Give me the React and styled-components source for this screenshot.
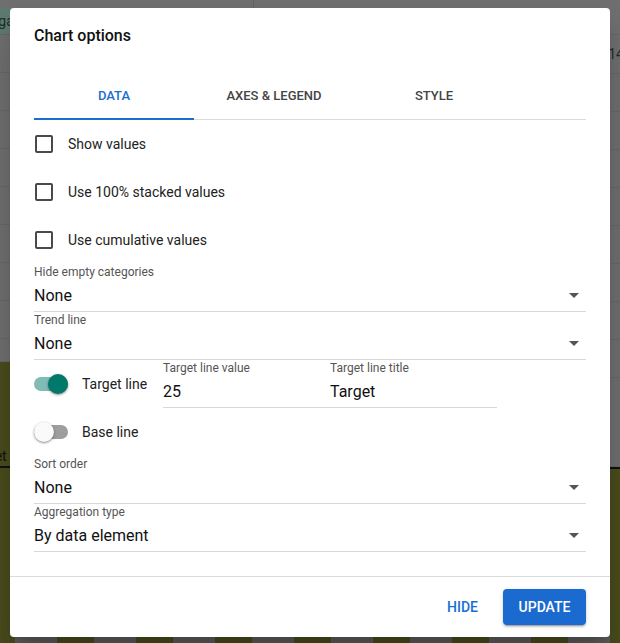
import React from "react";
import styled, { createGlobalStyle } from "styled-components";

const GlobalStyle = createGlobalStyle`
  body {
    margin: 0;
    font-family: Roboto, "Noto Sans", "Liberation Sans", sans-serif;
  }
`;

const Page = styled.div`
  position: relative;
  width: 620px;
  height: 643px;
  overflow: hidden;
  display: flex;
  flex-direction: column;
  background: #6f6f6f;
`;

const Panes = styled.div`
  flex: 1;
  display: grid;
  grid-template-columns: 253px 1fr;
`;

const Pane = styled.div`
  display: flex;
  flex-direction: column;
  border-left: ${props => (props.divided ? "1px solid #646464" : "none")};
`;

const TopGap = styled.div`
  height: ${props => props.h}px;
  flex: none;
`;

const HeadCell = styled.div`
  height: 26px;
  background: #5f7a72;
  color: #1d2a26;
  font-size: 14px;
  line-height: 26px;
  text-indent: -31px;
  overflow: hidden;
  white-space: nowrap;
  border-bottom: 1px solid #666;
`;

const Row = styled.div`
  height: ${props => props.h || 37}px;
  flex: none;
  border-bottom: 1px solid #676767;
  display: flex;
  align-items: center;
  justify-content: flex-end;
  font-size: 14px;
  color: #1f2a33;
`;

const RowValue = styled.span`
  margin-right: -4px;
`;

const Olive = styled.div`
  flex: 1;
  background: #494c1c;
  display: flex;
  flex-direction: column;
  justify-content: flex-end;
  border-top: ${props => (props.ruled ? "2px solid #111" : "none")};
`;

const Tag = styled.div`
  font-size: 14px;
  color: #111;
  text-indent: -33px;
  white-space: nowrap;
  overflow: hidden;
  padding-bottom: 2px;
  border-bottom: 2px solid #111;
  margin-bottom: 145px;
`;

const Bars = styled.div`
  height: 30px;
  flex: none;
  background: #494c1c;
  display: flex;
  gap: 37px;
  padding-left: 15px;
`;

const Bar = styled.div`
  width: 42px;
  flex: none;
  background: #5c5c5c;
`;

const Dialog = styled.div`
  position: absolute;
  left: 10px;
  top: 8px;
  width: 600px;
  height: 629px;
  background: #fff;
  border-radius: 4px;
  box-shadow: 0 11px 15px -7px rgba(0, 0, 0, 0.2),
    0 24px 38px 3px rgba(0, 0, 0, 0.14);
  display: flex;
  flex-direction: column;
`;

const Title = styled.h2`
  margin: 0;
  padding: 16px 24px 0;
  font-size: 16px;
  line-height: 24px;
  font-weight: 500;
  color: #111;
`;

const Body = styled.div`
  flex: 1;
  padding: 23px 24px 24px;
`;

const Tabs = styled.div`
  display: flex;
  height: 48px;
  border-bottom: 1px solid #dcdcdc;
`;

const Tab = styled.div`
  width: 160px;
  display: flex;
  align-items: center;
  justify-content: center;
  font-size: 13px;
  font-weight: 500;
  text-transform: uppercase;
  color: ${props => (props.active ? "#1a6ed2" : "#444")};
  border-bottom: 2px solid ${props => (props.active ? "#1a6ed2" : "transparent")};
  margin-bottom: -1px;
  padding-top: 1px;
`;

const CheckRow = styled.div`
  height: 48px;
  display: flex;
  align-items: center;
`;

const Box = styled.span`
  width: 14px;
  height: 14px;
  margin-left: 1px;
  border: 2px solid #4a4a4a;
  border-radius: 2px;
  flex: none;
`;

const CheckLabel = styled.span`
  margin-left: 15px;
  font-size: 14px;
  color: #222;
`;

const Field = styled.div`
  height: 48px;
  width: ${props => (props.w ? `${props.w}px` : "auto")};
  flex: none;
  display: flex;
  flex-direction: column;
`;

const FieldLabel = styled.div`
  font-size: 12px;
  line-height: 14px;
  color: #555;
  margin-top: 1px;
`;

const FieldValue = styled.div`
  flex: 1;
  display: flex;
  align-items: center;
  justify-content: space-between;
  border-bottom: 1px solid #d8d8d8;
  font-size: 16px;
  color: #111;
`;

const Caret = styled.span`
  width: 0;
  height: 0;
  border-left: 5px solid transparent;
  border-right: 5px solid transparent;
  border-top: 5px solid #555;
  margin-right: 7px;
  margin-top: 1px;
`;

const ToggleRow = styled.div`
  height: 48px;
  display: flex;
  align-items: center;
`;

const SwitchGroup = styled.div`
  width: 129px;
  flex: none;
  display: flex;
  align-items: center;
`;

const Track = styled.span`
  width: 34px;
  height: 14px;
  border-radius: 7px;
  flex: none;
  display: flex;
  align-items: center;
  justify-content: ${props => (props.on ? "flex-end" : "flex-start")};
  background: ${props => (props.on ? "#7fbcb5" : "#9e9e9e")};
`;

const Thumb = styled.span`
  width: 20px;
  height: 20px;
  border-radius: 50%;
  flex: none;
  background: ${props => (props.on ? "#00796b" : "#fafafa")};
  box-shadow: 0 1px 3px rgba(0, 0, 0, 0.35), 0 1px 1px rgba(0, 0, 0, 0.14);
`;

const ToggleLabel = styled.span`
  margin-left: 14px;
  font-size: 14px;
  color: #222;
`;

const Footer = styled.div`
  border-top: 1px solid #dcdcdc;
  padding: 12px 24px 12px;
  display: flex;
  justify-content: flex-end;
  align-items: center;
  gap: 9px;
`;

const Button = styled.button`
  height: 36px;
  padding: 0 ${props => (props.primary ? 15.5 : 16)}px;
  border: none;
  border-radius: 4px;
  font-family: inherit;
  font-size: 14px;
  font-weight: 500;
  text-transform: uppercase;
  cursor: pointer;
  color: ${props => (props.primary ? "#fff" : "#1a6ed2")};
  background: ${props => (props.primary ? "#1a6ad0" : "transparent")};
  box-shadow: ${props =>
    props.primary
      ? "0 3px 1px -2px rgba(0,0,0,0.2), 0 2px 2px 0 rgba(0,0,0,0.14), 0 1px 5px 0 rgba(0,0,0,0.12)"
      : "none"};
`;

function Select({ label, value }) {
  return (
    <Field>
      <FieldLabel>{label}</FieldLabel>
      <FieldValue>
        {value}
        <Caret />
      </FieldValue>
    </Field>
  );
}

function Toggle({ on, label, children }) {
  return (
    <ToggleRow>
      <SwitchGroup>
        <Track on={on}>
          <Thumb on={on} />
        </Track>
        <ToggleLabel>{label}</ToggleLabel>
      </SwitchGroup>
      {children}
    </ToggleRow>
  );
}

export default function App() {
  const checks = ["Show values", "Use 100% stacked values", "Use cumulative values"];
  return (
    <>
      <GlobalStyle />
      <Page>
        <Panes>
          <Pane>
            <TopGap h={8} />
            <HeadCell>Omega</HeadCell>
            <Row h={37} />
            <Row />
            <Row />
            <Row />
            <Row />
            <Row />
            <Row />
            <Row />
            <Row h={22} />
            <Olive>
              <Tag>Target</Tag>
            </Olive>
          </Pane>
          <Pane divided>
            <TopGap h={8} />
            <Row h={26} />
            <Row h={38}>
              <RowValue>14</RowValue>
            </Row>
            <Row />
            <Row />
            <Row />
            <Row />
            <Row />
            <Row />
            <Row />
            <Row />
            <Row h={88} />
            <Olive ruled />
          </Pane>
        </Panes>
        <Bars>
          {Array.from({ length: 8 }).map((_, i) => (
            <Bar key={i} />
          ))}
        </Bars>

        <Dialog>
          <Title>Chart options</Title>
          <Body>
            <Tabs>
              <Tab active>Data</Tab>
              <Tab>Axes &amp; legend</Tab>
              <Tab>Style</Tab>
            </Tabs>
            {checks.map(c => (
              <CheckRow key={c}>
                <Box />
                <CheckLabel>{c}</CheckLabel>
              </CheckRow>
            ))}
            <Select label="Hide empty categories" value="None" />
            <Select label="Trend line" value="None" />
            <Toggle on label="Target line">
              <Field w={167}>
                <FieldLabel>Target line value</FieldLabel>
                <FieldValue>25</FieldValue>
              </Field>
              <Field w={167}>
                <FieldLabel>Target line title</FieldLabel>
                <FieldValue>Target</FieldValue>
              </Field>
            </Toggle>
            <Toggle label="Base line" />
            <Select label="Sort order" value="None" />
            <Select label="Aggregation type" value="By data element" />
          </Body>
          <Footer>
            <Button>Hide</Button>
            <Button primary>Update</Button>
          </Footer>
        </Dialog>
      </Page>
    </>
  );
}
